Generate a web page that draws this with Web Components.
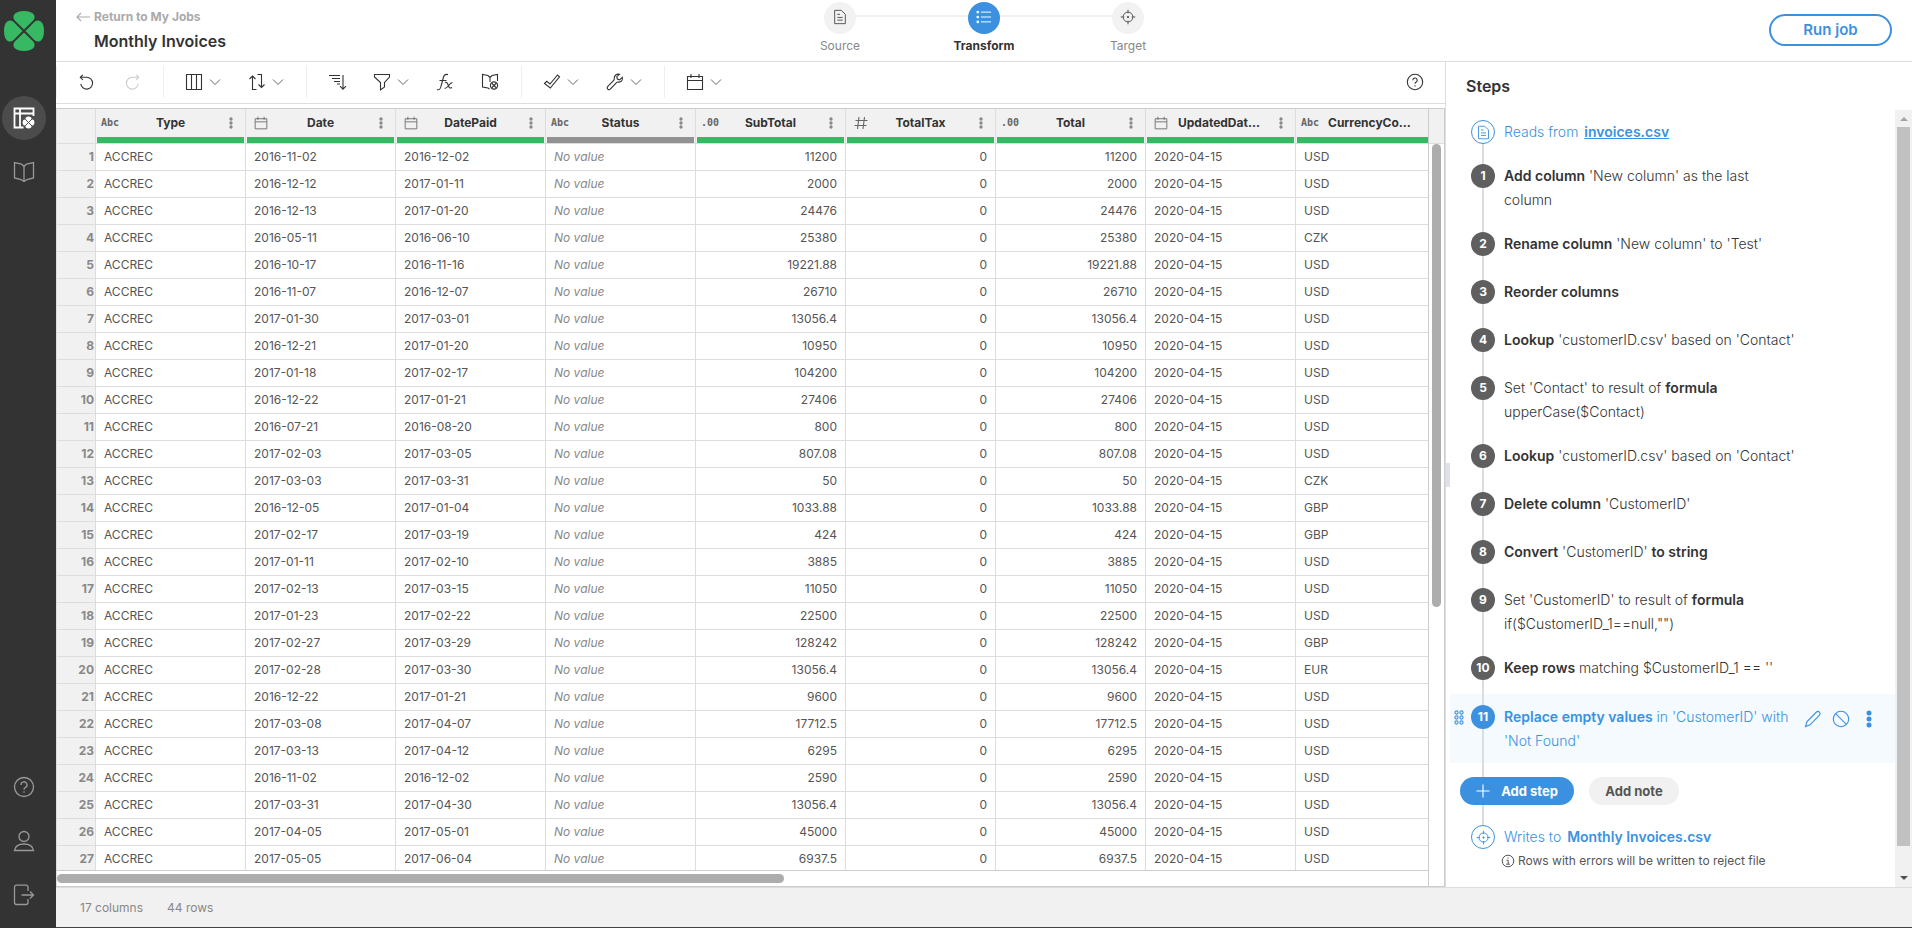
<!DOCTYPE html>
<html lang="en">
<head>
<meta charset="utf-8">
<title>Monthly Invoices</title>
<style>
  html, body { margin: 0; height: 100%; }
  body { font-family: Inter, "Liberation Sans", sans-serif; font-size: 12px; color: #333; background: #fff; overflow: hidden; }
</style>
</head>
<body>
<job-app></job-app>
<script>
const S = (d, extra = '') => `<path d="${d}" ${extra}/>`;
const ICONS = {
  undo: [18, S('M4.800 1.800 2.300 4.300 4.800 6.800M2.500 4.300h6.200a5.900 5.900 0 1 1-5.900 6.600')],
  redo: [18, S('M13.200 1.800l2.500 2.500-2.500 2.500M15.500 4.300H9.300a5.900 5.900 0 1 0 5.900 6.600')],
  columns: [18, S('M1.500 1.500h15v15h-15zM6.500 1.500v15M11.500 1.500v15')],
  sort: [18, S('M4.500 3v13.500h4M1.500 6l3-3 3 3M9.500 1.500h4v13M10.500 11.500l3 3 3-3')],
  lines: [18, S('M1 2.500h11M4 5.500h8M6 8.500h6M9 11h3M15 2v14M12 13.200l3 3 3-3')],
  funnel: [18, S('M1.500 1.500h15v2.500l-5 5.500v4.500l-4 3V9.500l-6-5.500z')],
  fx: [18, S('M1 16.500c2.500 1 3.500-1 4.200-4L7.500 4C8.200 1.800 9.500 1 12 1.600M3.500 7.500h7M9 9.500c2-.8 2.500.8 3.300 3 .8 2.500 1.700 3.200 3.700 2M16.500 9.500c-2 .2-3 2-4.200 3.500S10 15.500 8.500 15.500')],
  bookEye: [18, S('M9 4.500 7 2.500l-5.500-1V14L7 15l1.500 1M9 4.500l2-2 5.500-1V8M9 4.500V9') + `<circle cx="13" cy="12.500" r="3.600"/><path d="M10.500 10l5 5M15.500 10l-5 5"/>`],
  check: [18, S('M1.500 10.500 3.800 8.300 7 11 14.500 2l2 1.800L7.300 15z')],
  wrench: [18, S('M16.300 4.300 13.500 6.800 11.300 6l-.5-2.300L13.500 1.300C10.500.5 8 2.600 8.200 5.700c.1.800 0 1.200-.5 1.700L1.600 13.700c-.8 1-.4 2 .2 2.500.7.500 1.800.6 2.500-.2L10.500 9.600c.5-.5 1-.6 1.800-.5 3 .2 4.800-2 4-4.800z')],
  calendar: [18, S('M1.500 3.500h15v13h-15zM1.500 7.500h15M5 1v4M13 1v4')],
  chevron: [12, S('M1 3.500l5 5 5-5')],
  help: [18, `<circle cx="9" cy="9" r="7.700"/>` + S('M6.800 7.200a2.200 2.200 0 1 1 3.200 2c-.8.400-1 .8-1 1.600M9 12.300v1.100')],
  arrow: [14, S('M14 7H1M5 3 1 7l4 4')],
  doc: [18, S('M3 1.500h7.500l4.500 4.500v10.500H3zM6 6h3M6 9.500h6M6 12.500h6')],
  list: [18, S('M5.500 3.500H17M5.500 9H17M5.500 14.500H17') + `<g fill="currentColor" stroke="none"><circle cx="2" cy="3.500" r="1.500"/><circle cx="2" cy="9" r="1.500"/><circle cx="2" cy="14.500" r="1.500"/></g>`],
  target: [18, `<circle cx="9" cy="9" r="5.500"/><circle cx="9" cy="9" r=".8" fill="currentColor"/>` + S('M9 .8v4M9 13.200v4M.8 9h4M13.200 9h4')],
  hash: [14, S('M5 1 3.500 13M10.500 1 9 13M1.500 4.500h12M.5 9.500h12')],
  kebab: [18, `<g fill="currentColor" stroke="none"><circle cx="9" cy="3" r="2.500"/><circle cx="9" cy="9" r="2.500"/><circle cx="9" cy="15" r="2.500"/></g>`],
  pencil: [18, S('M1.500 16.500l1.500-5L12.500 2c1-.9 2-.7 2.900.2.900.9 1 2 .1 2.900L6 14.800z')],
  ban: [18, `<circle cx="9" cy="9" r="7.700"/>` + S('M3.600 3.600l10.800 10.800')],
  grip: [16, `<circle cx="4.500" cy="2.500" r="1.600"/><circle cx="9.500" cy="2.500" r="1.600"/><circle cx="4.500" cy="7.500" r="1.600"/><circle cx="9.500" cy="7.500" r="1.600"/><circle cx="4.500" cy="12.500" r="1.600"/><circle cx="9.500" cy="12.500" r="1.600"/>`],
  plus: [14, S('M7 .5v13M.5 7h13')],
  info: [14, `<circle cx="7" cy="7" r="5.800"/>` + S('M5.500 6.300h1.700v3.700M5.200 10.200h3.800M7 3.500v1.200')],
  book: [24, S('M12 6.500 9.500 4 2.500 2.500V18l6.500 1.500 3 2 3-2 6.500-1.500V2.500L14.500 4zM12 6.500V21')],
  user: [24, `<circle cx="12" cy="7.500" r="5"/>` + S('M2.500 21.500c.8-4.500 4.500-6.500 9.500-6.500s8.700 2 9.500 6.500z')],
  exit: [24, S('M16 8V4.200a2 2 0 0 0-2-2H4.500a2 2 0 0 0-2 2v15.300a2 2 0 0 0 2 2H14a2 2 0 0 0 2-2V16M9.500 12h12M18 8.500l3.500 3.500-3.500 3.500')],
  helpBig: [24, `<circle cx="12" cy="12" r="9.500"/>` + S('M9 10a3 3 0 1 1 4.300 2.500c-1 .5-1.300 1-1.300 2.200M12 16.300v1.400')],
  jobs: [24, S('M21.500 10V2.500h-19v19h9M2.500 7.500h19M8 2.500v19', 'stroke-width="1.800"') + `<g fill="currentColor" stroke="none"><circle cx="16.500" cy="13.800" r="3.200"/><circle cx="16.500" cy="19.200" r="3.200"/><circle cx="13.800" cy="16.500" r="3.200"/><circle cx="19.200" cy="16.500" r="3.200"/></g><path d="M13 13l7 7M20 13l-7 7" stroke="#4c4c4c" stroke-width="1"/>`],
  logo: [40, `<g fill="#36b962" stroke="none"><path d="M20 18.600 10.800 9.400C7.500 5.500 10 0 20 0s12.500 5.500 9.200 9.400z"/><path d="M20 21.400l-9.200 9.200C7.500 34.500 10 40 20 40s12.500-5.500 9.200-9.400z"/><path d="M18.600 20 9.400 10.800C5.500 7.500 0 10 0 20s5.500 12.500 9.400 9.200z"/><path d="M21.400 20l9.200-9.200C34.500 7.500 40 10 40 20s-5.500 12.500-9.400 9.200z"/></g>`]
};

function define(name, html) {
  customElements.define(name, class extends HTMLElement {
    connectedCallback() {
      if (this.shadowRoot) return;
      const root = this.attachShadow({ mode: 'open' });
      root.innerHTML = typeof html === 'function' ? html(this) : html;
    }
  });
}

define('app-icon', el => {
  const [box, body] = ICONS[el.getAttribute('name')];
  const size = el.getAttribute('size') || box;
  return `<style>:host{display:inline-flex;flex:none}svg{display:block;overflow:visible}</style>
  <svg width="${size}" height="${size}" viewBox="0 0 ${box} ${box}" fill="none" stroke="currentColor" stroke-width="${el.getAttribute('weight') || 1.1}" aria-hidden="true">${body}</svg>`;
});

define('side-nav', `
<style>
  :host { display: flex; flex-direction: column; align-items: center; box-sizing: border-box; width: 56px; padding: 11px 8px 21px 0; background: #333; color: #999; }
  nav { display: flex; flex-direction: column; align-items: center; }
  .top { margin-top: 45px; gap: 20px; flex: 1; }
  .bottom { gap: 30px; }
  a { display: flex; color: inherit; }
  .round { width: 44px; height: 44px; border-radius: 50%; align-items: center; justify-content: center; }
  .on { background: #4c4c4c; color: #fff; }
</style>
<app-icon name="logo"></app-icon>
<nav class="top" aria-label="Main">
  <a href="#" class="round on" aria-label="Jobs"><app-icon name="jobs"></app-icon></a>
  <a href="#" aria-label="Library"><app-icon name="book" weight="1.3"></app-icon></a>
</nav>
<nav class="bottom" aria-label="Account">
  <a href="#" aria-label="Help"><app-icon name="helpBig" weight="1.3"></app-icon></a>
  <a href="#" aria-label="Profile"><app-icon name="user" weight="1.3"></app-icon></a>
  <a href="#" aria-label="Sign out"><app-icon name="exit" weight="1.3"></app-icon></a>
</nav>`);

define('stage-item', el => `
<style>
  :host { display: flex; flex-direction: column; align-items: center; width: 144px; font-size: 12px; line-height: 20px; color: #888;
    background: linear-gradient(#f2f2f2, #f2f2f2) var(--line-x, 0) 15px / var(--line-w, 100%) 2px no-repeat; }
  .dot { display: flex; box-sizing: border-box; justify-content: center; width: 32px; height: 32px; margin: 2px 0; padding-top: 7px; border-radius: 50%; background: #f2f2f2; color: #555; }
  :host([active]) { color: #333; font-weight: 700; }
  :host([active]) .dot { background: #3b91df; color: #fff; }
</style>
<span class="dot"><app-icon name="${el.getAttribute('icon')}" size="16"></app-icon></span><slot></slot>`);

define('job-header', `
<style>
  :host { display: grid; grid-template-columns: 1fr auto 1fr; height: 61px; border-bottom: 1px solid #ddd; }
  a { display: flex; align-items: center; gap: 4px; color: #aaa; font-size: 12px; line-height: 20px; font-weight: 700; text-decoration: none; }
  .title { padding: 7px 0 0 20px; }
  h1 { margin: 4px 0 0 18px; font-size: 16px; line-height: 20px; font-weight: 600; }
  .stages { display: flex; }
  .first { --line-x: 72px; }
  .last { --line-w: 72px; }
  .act { display: flex; justify-content: flex-end; align-items: flex-start; padding: 14px 20px 0 0; }
  button { width: 123px; height: 32px; border: 2px solid #3b91df; border-radius: 16px; background: #fff; color: #3b91df; font: 600 15px/20px Inter, sans-serif; padding: 0; }
</style>
<div class="title"><a href="#"><app-icon name="arrow"></app-icon>Return to My Jobs</a><h1>Monthly Invoices</h1></div>
<div class="stages">
  <stage-item class="first" icon="doc">Source</stage-item>
  <stage-item icon="list" active>Transform</stage-item>
  <stage-item class="last" icon="target">Target</stage-item>
</div>
<div class="act"><button type="button">Run job</button></div>`);

define('tool-button', el => `
<style>
  :host { display: inline-flex; }
  button { display: flex; align-items: center; gap: 6px; padding: 0; border: 0; background: none; color: #333; height: 32px; }
  button:disabled { color: #ccc; }
  .chev { color: #666; display: flex; }
</style>
<button type="button" aria-label="${el.getAttribute('label')}" ${el.hasAttribute('off') ? 'disabled' : ''}>
<app-icon name="${el.getAttribute('icon')}"></app-icon>${el.hasAttribute('menu') ? '<span class="chev"><app-icon name="chevron" weight="1"></app-icon></span>' : ''}</button>`);

define('tool-bar', `
<style>
  :host { display: flex; align-items: center; height: 40px; padding-bottom: 1px; border-bottom: 1px solid #ddd; }
  .g { display: flex; align-items: center; gap: 27px; height: 32px; padding: 0 22px 0 21px; border-left: 1px solid #eee; }
  .g:first-child { border: 0; padding: 0 21px; }
  .end { margin-left: auto; padding-right: 21px; display: flex; }
</style>
<div class="g"><tool-button icon="undo" label="Undo"></tool-button><tool-button icon="redo" label="Redo" off></tool-button></div>
<div class="g"><tool-button icon="columns" label="Columns" menu></tool-button><tool-button icon="sort" label="Convert" menu></tool-button></div>
<div class="g"><tool-button icon="lines" label="Sort"></tool-button><tool-button icon="funnel" label="Filter" menu></tool-button><tool-button icon="fx" label="Formula"></tool-button><tool-button icon="bookEye" label="Lookup"></tool-button></div>
<div class="g"><tool-button icon="check" label="Validate" menu></tool-button><tool-button icon="wrench" label="Fix" menu></tool-button></div>
<div class="g"><tool-button icon="calendar" label="Date" menu></tool-button></div>
<div class="end"><tool-button icon="help" label="Help"></tool-button></div>`);

const COLS = [['Type','abc'],['Date','cal'],['DatePaid','cal'],['Status','abc'],['SubTotal','dec'],['TotalTax','num'],['Total','dec'],['UpdatedDat...','cal'],['CurrencyCo...','abc']];
const ROWS = `2016-11-02 2016-12-02 11200 USD
2016-12-12 2017-01-11 2000 USD
2016-12-13 2017-01-20 24476 USD
2016-05-11 2016-06-10 25380 CZK
2016-10-17 2016-11-16 19221.88 USD
2016-11-07 2016-12-07 26710 USD
2017-01-30 2017-03-01 13056.4 USD
2016-12-21 2017-01-20 10950 USD
2017-01-18 2017-02-17 104200 USD
2016-12-22 2017-01-21 27406 USD
2016-07-21 2016-08-20 800 USD
2017-02-03 2017-03-05 807.08 USD
2017-03-03 2017-03-31 50 CZK
2016-12-05 2017-01-04 1033.88 GBP
2017-02-17 2017-03-19 424 GBP
2017-01-11 2017-02-10 3885 USD
2017-02-13 2017-03-15 11050 USD
2017-01-23 2017-02-22 22500 USD
2017-02-27 2017-03-29 128242 GBP
2017-02-28 2017-03-30 13056.4 EUR
2016-12-22 2017-01-21 9600 USD
2017-03-08 2017-04-07 17712.5 USD
2017-03-13 2017-04-12 6295 USD
2016-11-02 2016-12-02 2590 USD
2017-03-31 2017-04-30 13056.4 USD
2017-04-05 2017-05-01 45000 USD
2017-05-05 2017-06-04 6937.5 USD`.split('\n').map(r => r.split(' '));
const KIND = { abc: 'Abc', dec: '.00', cal: '<app-icon name="calendar" size="14"></app-icon>', num: '<app-icon name="hash"></app-icon>' };

define('data-grid', () => `
<style>
  :host { display: grid; grid-template: minmax(0, 1fr) 15px / minmax(0, 1fr) 15px; margin-top: 4px; border: 1px solid #ccc; border-left: 0; min-height: 0; }
  .view { overflow: hidden; border-right: 1px solid #ccc; border-bottom: 1px solid #ccc; border-left: 1px solid #ddd; }
  table { table-layout: fixed; border-collapse: separate; border-spacing: 0; width: 1389px; font-size: 12px; line-height: 16px; }
  col { width: 150px; } col.n { width: 39px; }
  th, td { box-sizing: border-box; padding: 0; border-right: 1px solid #ddd; border-bottom: 1px solid #ddd; white-space: nowrap; }
  thead th { height: 35px; background: #f1f1f1; vertical-align: top; }
  .h { display: grid; grid-template-columns: 27px 1fr 27px; align-items: center; height: 28px; padding: 0 5px; }
  .k { display: flex; font: 700 10px/16px "DejaVu Sans Mono", monospace; color: #666; }
  .k app-icon { margin-left: 3px; }
  .t { text-align: center; font-size: 12px; font-weight: 700; color: #333; }
  .long { text-align: left; }
  .h button { display: flex; justify-content: flex-end; padding: 0 3px 0 0; border: 0; background: none; color: #888; }
  .bar { height: 6px; margin: 0 1px; background: #36b962; }
  .bar.none { background: #929292; }
  tbody td, tbody th { height: 27px; }
  td { padding: 0 8px; color: #555; }
  tbody th { background: #f1f1f1; color: #888; font-size: 12px; font-weight: 700; text-align: right; padding-right: 1px; }
  .r { text-align: right; } .e { font-style: italic; color: #888; }
  .v { display: flex; flex-direction: column; align-items: center; }
  .v::before { content: ""; width: 100%; height: 34px; background: #f1f1f1; border-bottom: 1px solid #ddd; }
  .v i { width: 9px; height: 463px; border-radius: 5px; background: #adadad; }
  .x { display: flex; align-items: center; border-left: 1px solid #ddd; border-right: 1px solid #ccc; }
  .x i { width: 53%; height: 9px; border-radius: 5px; background: #adadad; }
</style>
<div class="view"><table>
<colgroup><col class="n">${COLS.map(() => '<col>').join('')}</colgroup>
<thead><tr><th></th>${COLS.map(([t, k]) => `<th scope="col"><div class="h"><span class="k">${KIND[k]}</span><span class="t ${t.endsWith('...') ? 'long' : ''}">${t}</span><button type="button" aria-label="Column menu"><app-icon name="kebab" size="12"></app-icon></button></div><div class="bar ${t === 'Status' ? 'none' : ''}"></div></th>`).join('')}</tr></thead>
<tbody>${ROWS.map(([d, p, s, c], i) => `<tr><th scope="row">${i + 1}</th><td>ACCREC</td><td>${d}</td><td>${p}</td><td class="e">No value</td><td class="r">${s}</td><td class="r">0</td><td class="r">${s}</td><td>2020-04-15</td><td>${c}</td></tr>`).join('')}</tbody>
</table></div>
<div class="v"><i></i></div>
<div class="x"><i></i></div>`);

define('step-row', el => {
  const n = el.getAttribute('n'), icon = el.getAttribute('icon'), active = el.hasAttribute('active');
  return `
<style>
  :host { display: grid; grid-template-columns: 21px 24px minmax(0, 1fr) 96px; font-size: 14px; line-height: 24px; --c: #5f5f5f; }
  .rail { padding-top: 10px; background: linear-gradient(#ddd, #ddd) 11px 0 / 2px 100% no-repeat; }
  .dot { display: flex; box-sizing: border-box; align-items: center; justify-content: center; width: 24px; height: 24px; border-radius: 50%; background: var(--c); color: #fff; font-size: 12px; font-weight: 700; }
  .text { padding: 10px 0 10px 9px; min-height: 28px; font-weight: 300; }
  :host([active]) { --c: #3b91df; color: #3b91df; background: #f4fafe; }
  :host([active]) .rail, :host([active]) .text { padding-top: 11px; }
  .grip { padding: 15px 0 0 2px; }
  .acts { display: flex; align-items: flex-start; gap: 10px; padding: 16px 0 0 5px; }
  .acts button { display: flex; padding: 0; border: 0; background: none; color: inherit; }
  :host([end]) { color: #3b91df; }
  :host([end]) .dot { background: #fff; border: 1px solid #3b91df; color: #3b91df; }
  :host([end]) .text { padding-top: 0; min-height: 24px; }
  :host([end]) .rail { padding-top: 0; }
  :host([end=last]) .rail { background: none; }
  :host([end=last]) .text { padding-bottom: 0; }
</style>
<span class="grip">${active ? '<app-icon name="grip"></app-icon>' : ''}</span>
<div class="rail"><span class="dot">${icon ? `<app-icon name="${icon}" size="15"></app-icon>` : n}</span></div>
<div class="text"><slot></slot></div>
${active ? '<div class="acts"><button type="button" aria-label="Edit"><app-icon name="pencil"></app-icon></button><button type="button" aria-label="Disable"><app-icon name="ban"></app-icon></button><button type="button" aria-label="More"><app-icon name="kebab" size="18"></app-icon></button></div>' : ''}`;
});

define('steps-panel', `
<style>
  :host { display: grid; grid-template: 48px minmax(0, 1fr) / 4px minmax(0, 1fr) 17px; border-left: 1px solid #ddd; min-height: 0; }
  h2 { grid-column: 1 / -1; margin: 0; padding: 14px 0 0 20px; font-size: 16px; line-height: 20px; font-weight: 600; }
  .handle { align-self: start; width: 4px; height: 24px; margin-top: 353px; background: #dee1e6; }
  .list { padding-top: 10px; overflow: hidden; }
  b { font-weight: 600; }
  a { color: inherit; font-weight: 600; }
  [end] a, [end] b { margin-left: 2px; }
  .add { display: flex; gap: 15px; padding: 14px 0 20px 10px; background: linear-gradient(#ddd, #ddd) 32px 0 / 2px 100% no-repeat; }
  button { height: 28px; border: 0; border-radius: 14px; font: 700 13px/20px Inter, sans-serif; display: flex; align-items: center; justify-content: center; padding: 0; }
  .p { width: 114px; background: #3b91df; color: #fff; gap: 11px; }
  .s { width: 90px; background: #f1f1f1; color: #555; }
  .note { display: flex; align-items: center; gap: 3px; margin: 4px 0 0 51px; font-size: 12px; line-height: 16px; color: #555; }
  .bar { display: flex; flex-direction: column; align-items: center; background: #f1f1f1; }
  .bar i { width: 13px; flex: 1; background: #c1c1c1; margin-bottom: 30px; }
  .up, .dn { width: 0; border: 4px solid transparent; }
  .up { border-bottom-color: #a3a3a3; border-top: 0; margin: 7px 0 6px; }
  .dn { border-top-color: #505050; border-bottom: 0; margin-bottom: 7px; }
</style>
<h2>Steps</h2>
<span class="handle"></span>
<div class="list">
<step-row end="first" icon="doc">Reads from <a href="#">invoices.csv</a></step-row>
<step-row n="1"><b>Add column</b> 'New column' as the last column</step-row>
<step-row n="2"><b>Rename column</b> 'New column' to 'Test'</step-row>
<step-row n="3"><b>Reorder columns</b></step-row>
<step-row n="4"><b>Lookup</b> 'customerID.csv' based on 'Contact'</step-row>
<step-row n="5">Set 'Contact' to result of <b>formula</b> upperCase($Contact)</step-row>
<step-row n="6"><b>Lookup</b> 'customerID.csv' based on 'Contact'</step-row>
<step-row n="7"><b>Delete column</b> 'CustomerID'</step-row>
<step-row n="8"><b>Convert</b> 'CustomerID' <b>to string</b></step-row>
<step-row n="9">Set 'CustomerID' to result of <b>formula</b> if($CustomerID_1==null,"")</step-row>
<step-row n="10"><b>Keep rows</b> matching $CustomerID_1 == ''</step-row>
<step-row n="11" active><b>Replace empty values</b> in 'CustomerID' with 'Not Found'</step-row>
<div class="add"><button type="button" class="p"><app-icon name="plus"></app-icon>Add step</button><button type="button" class="s">Add note</button></div>
<step-row end="last" icon="target">Writes to <b>Monthly Invoices.csv</b></step-row>
<div class="note"><app-icon name="info" weight="1"></app-icon>Rows with errors will be written to reject file</div>
</div>
<div class="bar"><span class="up"></span><i></i><span class="dn"></span></div>`);

define('job-app', `
<style>
  :host { display: grid; grid-template: auto minmax(0, 1fr) auto / 56px minmax(0, 1fr) 467px; height: 100vh; }
  side-nav { grid-row: 1 / -1; }
  job-header, footer { grid-column: 2 / -1; }
  main { display: flex; flex-direction: column; min-width: 0; min-height: 0; }
  data-grid { flex: 1; }
  footer { display: flex; gap: 24px; padding: 10px 24px 9px; border-top: 1px solid #ddd; border-bottom: 1px solid #444; background: #f1f1f1; color: #888; font-size: 12px; line-height: 20px; }
</style>
<side-nav></side-nav>
<job-header></job-header>
<main><tool-bar></tool-bar><data-grid></data-grid></main>
<steps-panel></steps-panel>
<footer><span>17 columns</span><span>44 rows</span></footer>`);
</script>
</body>
</html>
